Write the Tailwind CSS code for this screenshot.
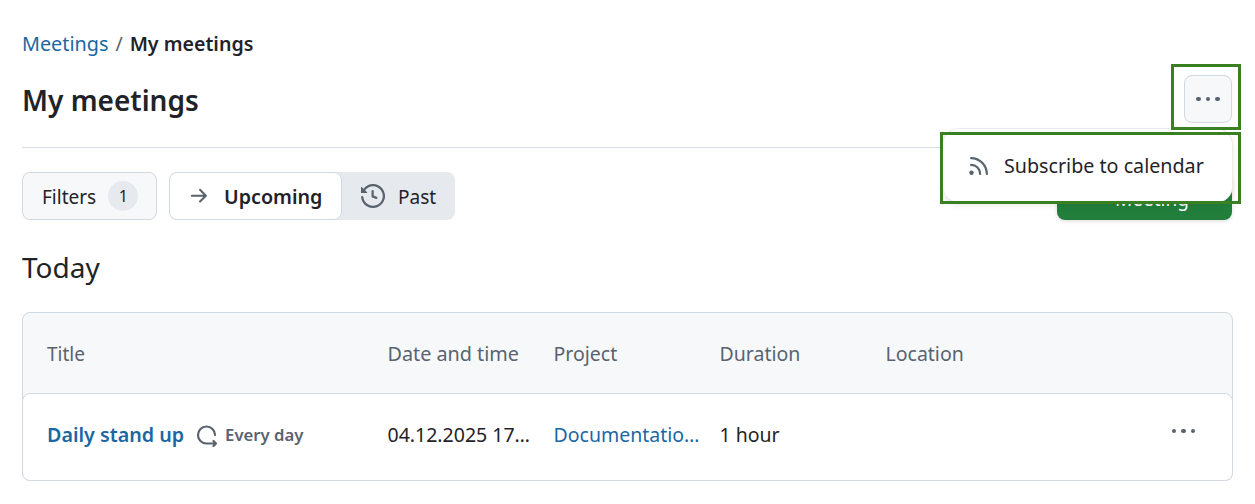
<!DOCTYPE html>
<html><head><script src="https://cdn.jsdelivr.net/npm/@tailwindcss/browser@4"></script></head>
<body class="bg-white font-['Noto_Sans',sans-serif] text-[#1f2328] text-[19.5px] overflow-hidden">
<div class="relative w-[1255px] h-[504px] px-[22px] pt-[30px]">
  <nav class="flex items-center h-[28px] gap-[7px]"><span class="text-[#1a67a3] text-[19.8px]">Meetings</span><span class="text-[#59636e]">/</span><span class="font-semibold text-[19.6px]">My meetings</span></nav>
  <header class="flex items-center justify-between mt-[16px] h-[50px] pr-[1px]">
    <h1 class="text-[28px] font-semibold mt-[2px]">My meetings</h1>
    <button class="w-[48px] h-[48px] rounded-[8px] bg-[#f6f8fa] border border-[#d1d9e0] flex items-center justify-center gap-[5px]">
      <i class="size-[4.5px] rounded-full bg-[#59636e]"></i><i class="size-[4.5px] rounded-full bg-[#59636e]"></i><i class="size-[4.5px] rounded-full bg-[#59636e]"></i>
    </button>
  </header>
  <div class="h-px bg-[#d8dee4] mt-[23px] w-[1210px]"></div>
  <div class="flex items-center justify-between mt-[24px] h-[48px]">
    <div class="flex items-center gap-[12px]">
      <button class="h-[48px] w-[135px] rounded-[8px] bg-[#f6f8fa] border border-[#d1d9e0] flex items-center pl-[19px] gap-[12px] text-[19px]"><span class="pt-[2px]">Filters</span><span class="size-[30px] rounded-full bg-[#e6eaef] flex items-center justify-center text-[16px]">1</span></button>
      <div class="flex h-[48px] rounded-[8px] bg-[#e6eaef]">
        <button class="w-[173px] rounded-[8px] bg-white border border-[#d1d9e0] flex items-center pl-[18px] gap-[14px] font-semibold">
          <svg class="size-[22px]" viewBox="0 0 16 16" fill="#59636e"><path d="M8.22 2.97a.75.75 0 0 1 1.06 0l4.25 4.25a.75.75 0 0 1 0 1.06l-4.25 4.25a.75.75 0 0 1-1.06-1.06l2.97-2.97H2.75a.75.75 0 0 1 0-1.5h8.44L8.22 4.03a.75.75 0 0 1 0-1.06Z"/></svg><span class="pt-[2px] text-[19.7px]">Upcoming</span></button>
        <div class="w-[113px] flex items-center pl-[19px] gap-[13px] text-[19px]">
          <svg class="size-[24px]" viewBox="0 0 16 16" fill="#59636e"><path d="m.427 1.927 1.215 1.215a8.002 8.002 0 1 1-1.6 5.685.75.75 0 1 1 1.493-.154 6.5 6.5 0 1 0 1.18-4.458l1.358 1.358A.25.25 0 0 1 3.896 6H.25A.25.25 0 0 1 0 5.75V2.104a.25.25 0 0 1 .427-.177ZM7.75 4a.75.75 0 0 1 .75.75v2.992l2.028.812a.75.75 0 0 1-.557 1.392l-2.5-1A.751.751 0 0 1 7 8.25v-3.5A.75.75 0 0 1 7.75 4Z"/></svg><span class="pt-[2px]">Past</span></div>
      </div>
    </div>
    <button class="w-[175px] h-[48px] mr-[1px] rounded-[8px] bg-[#217f3b] shadow-[0_1px_4px_rgba(0,0,0,0.15)] text-white text-[19px] flex items-center justify-center pr-[1px] pt-[6px]">+ Meeting</button>
  </div>
  <h2 class="text-[28px] mt-[28px] leading-[38px]">Today</h2>
  <div class="mt-[26px] w-[1211px] h-[169px] rounded-[8px] border border-[#d1d9e0] bg-[#f6f8fa]">
    <div class="grid grid-cols-[340.5px_166px_166px_166px_1fr] h-[80px] pt-[2px] items-center pl-[24px] text-[#59636e]">
      <span class="text-[19px]">Title</span><span class="text-[19.8px]">Date and time</span><span>Project</span><span>Duration</span><span>Location</span>
    </div>
    <div class="grid grid-cols-[340.5px_166px_166px_166px_1fr] h-[88px] pb-[4px] items-center pl-[24px] bg-white rounded-[8px] border-t border-[#d1d9e0] -mx-px border-x border-b">
      <div class="flex items-center"><span class="font-semibold text-[#1a67a3] text-[19.7px]">Daily stand up</span>
        <svg class="size-[24px] ml-[11px] mr-[6px]" viewBox="0 0 24 24" fill="none" stroke="#59636e" stroke-width="2.2" stroke-linecap="round" stroke-linejoin="round"><path d="M20 12a8.5 8.5 0 1 0-8.5 8.5H21M18.5 18l2.5 2.5-2.5 2.5"/></svg>
        <span class="text-[16.7px] font-semibold text-[#59636e]">Every day</span></div>
      <span class="truncate w-[144px]">04.12.2025 17:00</span>
      <span class="truncate w-[147px] text-[#1a67a3]">Documentation of project</span>
      <span>1 hour</span>
      <div class="flex justify-end gap-[5px] pr-[37px] -mt-[8px]"><i class="size-[4.5px] rounded-full bg-[#59636e]"></i><i class="size-[4.5px] rounded-full bg-[#59636e]"></i><i class="size-[4.5px] rounded-full bg-[#59636e]"></i></div>
    </div>
  </div>

  <div class="absolute left-[943px] top-[129px] w-[289px] h-[73px] bg-white rounded-[16px] shadow-[0_0_0_1px_#e9ecef,0_3px_6px_rgba(0,0,0,0.1)] flex items-center pl-[24px] gap-[13px]">
    <svg class="size-[24px]" viewBox="0 0 16 16" fill="#59636e"><path d="M2 2.75A.75.75 0 0 1 2.75 2C8.963 2 14 7.037 14 13.25a.75.75 0 0 1-1.5 0c0-5.385-4.365-9.75-9.75-9.75A.75.75 0 0 1 2 2.75Zm0 4.5a.75.75 0 0 1 .75-.75 6.75 6.75 0 0 1 6.75 6.75.75.75 0 0 1-1.5 0C8 10.35 5.65 8 2.75 8A.75.75 0 0 1 2 7.25ZM3 11a1.5 1.5 0 1 1-.001 3.001A1.5 1.5 0 0 1 3 11Z"/></svg>
    <span class="text-[19.7px]">Subscribe to calendar</span>
  </div>
  <div class="absolute left-[1171px] top-[64px] w-[70px] h-[66px] border-[3px] border-[#3b7f23]"></div>
  <div class="absolute left-[940px] top-[132px] w-[301px] h-[72px] border-[3px] border-[#3b7f23]"></div>
</div>
</body></html>
